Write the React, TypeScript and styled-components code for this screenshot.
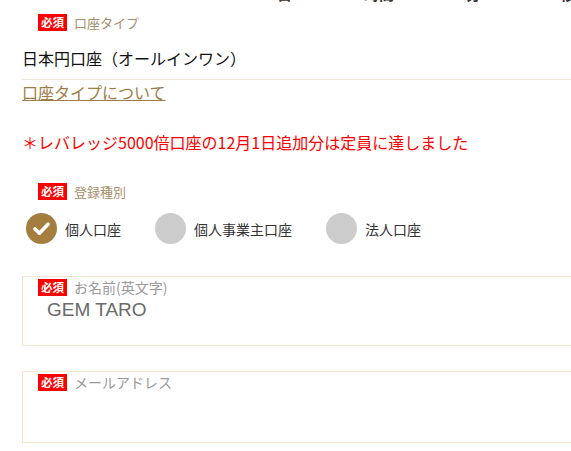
import React from 'react';
import styled, { createGlobalStyle } from 'styled-components';

const GlobalStyle = createGlobalStyle`
    html, body {
        margin: 0;
        padding: 0;
        background: #fff;
        overflow: hidden;
    }
    body {
        font-family: 'Noto Sans CJK JP', 'Noto Sans', sans-serif;
        color: #222;
    }
`;

const Page = styled.div`
    width: 620px;
    padding-left: 22px;
`;

const CountdownRow = styled.div`
    display: grid;
    grid-template-columns: 87px 102px 94px 60px;
    margin-left: 255px;
    margin-top: -17px;
    height: 22px;
    font-size: 15px;
    font-weight: bold;
    line-height: 22px;
    color: #333;
`;

const LabelRow = styled.div<{ $top: number; $inset?: number }>`
    display: flex;
    align-items: center;
    gap: 7px;
    height: 17px;
    padding-left: ${(props) => props.$inset ?? 16}px;
    margin-top: ${(props) => props.$top}px;
`;

const Badge = styled.span`
    display: flex;
    align-items: center;
    justify-content: center;
    width: 29px;
    height: 17px;
    background: #ff0000;
    color: #fff;
    font-size: 11.5px;
    font-weight: bold;
    line-height: 1;
`;

const LabelText = styled.span<{ $tone: 'gold' | 'gray' }>`
    font-size: ${(props) => (props.$tone === 'gold' ? 13 : 14)}px;
    line-height: 17px;
    color: ${(props) => (props.$tone === 'gold' ? '#a58f6c' : '#999')};
`;

const SelectedValue = styled.div`
    margin-top: 15px;
    padding-bottom: 9px;
    border-bottom: 1px solid #efe6d8;
    font-size: 16px;
    line-height: 24px;
    color: #111;
`;

const InfoLink = styled.a`
    display: inline-block;
    font-size: 16px;
    line-height: 22px;
    color: #9d7d45;
    text-decoration: underline;
    cursor: pointer;
`;

const Notice = styled.p`
    margin: 26px 0 0 0;
    font-size: 16px;
    line-height: 24px;
    color: #ff0000;
`;

const RadioGroup = styled.div`
    display: flex;
    align-items: center;
    gap: 34px;
    margin-top: 13px;
    padding-left: 4px;
`;

const RadioItem = styled.label`
    display: flex;
    align-items: center;
    gap: 8px;
    font-size: 14px;
    color: #333;
    cursor: pointer;
`;

const RadioMark = styled.span<{ $checked: boolean }>`
    display: flex;
    align-items: center;
    justify-content: center;
    width: 31px;
    height: 31px;
    border-radius: 50%;
    background: ${(props) => (props.$checked ? '#a37e3e' : '#cccccc')};
`;

const FieldBox = styled.div<{ $top: number; $height: number }>`
    box-sizing: border-box;
    margin-top: ${(props) => props.$top}px;
    height: ${(props) => props.$height}px;
    border: 1px solid #f2e6cf;
    border-right: none;
    padding-top: 2px;
`;

const FieldInput = styled.input`
    display: block;
    margin: 2px 0 0 24px;
    padding: 0;
    border: none;
    outline: none;
    background: transparent;
    font-family: 'Liberation Sans', Arial, sans-serif;
    font-size: 19px;
    line-height: 24px;
    height: 24px;
    width: 400px;
    color: #6a6a6a;
`;

const radios = [
    { label: '個人口座', checked: true },
    { label: '個人事業主口座', checked: false },
    { label: '法人口座', checked: false },
];

const CheckIcon = () => (
    <svg width="31" height="31" viewBox="0 0 31 31">
        <path
            d="M9 16 L13.4 20.2 L22 11.2"
            fill="none"
            stroke="#fff"
            strokeWidth="3.6"
            strokeLinecap="round"
            strokeLinejoin="round"
        />
    </svg>
);

const Required = ({ label, tone }: { label: string; tone: 'gold' | 'gray' }) => (
    <>
        <Badge>必須</Badge>
        <LabelText $tone={tone}>{label}</LabelText>
    </>
);

const App = () => {
    return (
        <Page>
            <GlobalStyle />
            <CountdownRow>
                <span>日</span>
                <span>時間</span>
                <span>分</span>
                <span>秒</span>
            </CountdownRow>

            <LabelRow $top={9}>
                <Required label="口座タイプ" tone="gold" />
            </LabelRow>
            <SelectedValue>日本円口座（オールインワン）</SelectedValue>
            <InfoLink>口座タイプについて</InfoLink>

            <Notice>＊レバレッジ5000倍口座の12月1日追加分は定員に達しました</Notice>

            <LabelRow $top={29}>
                <Required label="登録種別" tone="gold" />
            </LabelRow>
            <RadioGroup>
                {radios.map((r) => (
                    <RadioItem key={r.label}>
                        <RadioMark $checked={r.checked}>
                            {r.checked && <CheckIcon />}
                        </RadioMark>
                        {r.label}
                    </RadioItem>
                ))}
            </RadioGroup>

            <FieldBox $top={32} $height={70}>
                <LabelRow $top={0} $inset={15}>
                    <Required label="お名前(英文字)" tone="gray" />
                </LabelRow>
                <FieldInput defaultValue="GEM TARO" readOnly />
            </FieldBox>

            <FieldBox $top={25} $height={72}>
                <LabelRow $top={0} $inset={15}>
                    <Required label="メールアドレス" tone="gray" />
                </LabelRow>
                <FieldInput defaultValue="" readOnly />
            </FieldBox>
        </Page>
    );
};

export default App;
